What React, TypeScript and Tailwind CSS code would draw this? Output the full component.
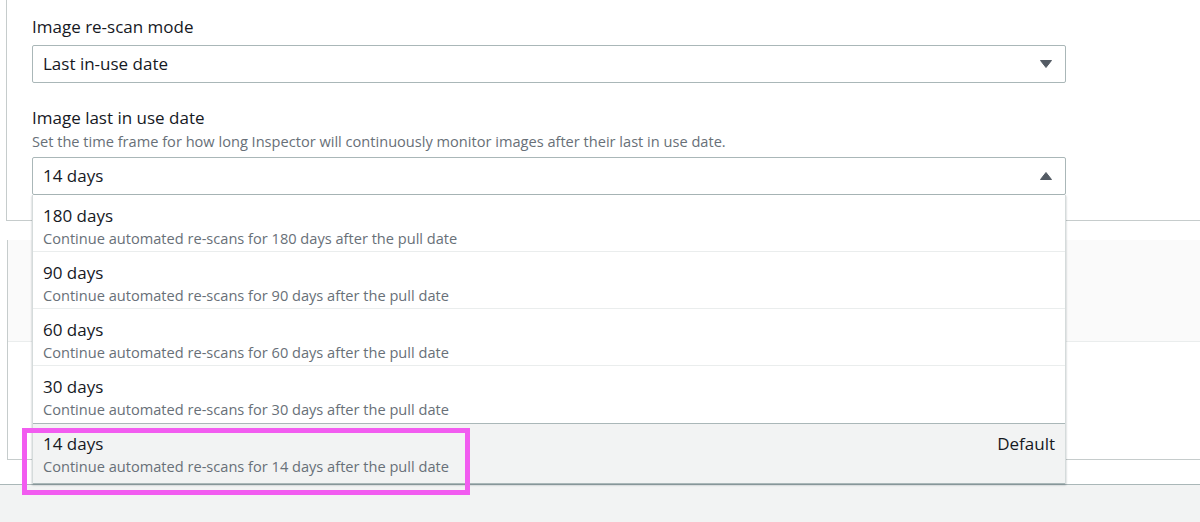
import React from "react";

const options = [
  { value: "180 days", days: 180 },
  { value: "90 days", days: 90 },
  { value: "60 days", days: 60 },
  { value: "30 days", days: 30 },
  { value: "14 days", days: 14, selected: true },
];

function Caret({ up }: { up?: boolean }) {
  return (
    <svg width="14" height="10" viewBox="0 0 14 10" className="shrink-0">
      {up ? (
        <path d="M7 1.5 L12.5 8.5 L1.5 8.5 Z" fill="#545b64" stroke="#545b64" strokeWidth="1" strokeLinejoin="round" />
      ) : (
        <path d="M1.5 1.5 L12.5 1.5 L7 8.5 Z" fill="#545b64" stroke="#545b64" strokeWidth="1" strokeLinejoin="round" />
      )}
    </svg>
  );
}

function SelectBox({ label, open }: { label: string; open?: boolean }) {
  return (
    <div className="flex items-center justify-between h-[38px] w-[1034px] rounded-[2px] border border-[#aab7b8] bg-white pl-[10px] pr-[12px] text-[17px] text-[#16191f]">
      <span>{label}</span>
      <Caret up={open} />
    </div>
  );
}

export default function App() {
  return (
    <div
      className="relative w-[1200px] h-[522px] overflow-hidden bg-white flex flex-col"
      style={{ fontFamily: '"Open Sans", "Liberation Sans", Arial, sans-serif' }}
    >
      {/* settings card */}
      <div className="ml-[6px] w-[1220px] h-[221px] shrink-0 border-l border-b border-[#c6cccc] pl-[25px] pt-[16px]">
        <div className="text-[17px] leading-[22px] text-[#16191f]">Image re-scan mode</div>
        <div className="mt-[7px]">
          <SelectBox label="Last in-use date" />
        </div>
        <div className="mt-[24px] text-[17px] leading-[22px] text-[#16191f]">Image last in use date</div>
        <div className="mt-[2px] text-[14.6px] leading-[20px] text-[#687078]">
          Set the time frame for how long Inspector will continuously monitor images after their last in use date.
        </div>
        <div className="relative mt-[6px] z-10">
          <SelectBox label="14 days" open />
          <div className="absolute left-0 top-full w-[1034px] bg-white border-x border-[#d5dbdb] shadow-[0_1px_2px_rgba(0,28,36,0.3)]">
            {options.map((o, i) => (
              <div
                key={o.value}
                className={
                  o.selected
                    ? "flex justify-between h-[61px] px-[10px] pt-[9px] bg-[#f2f3f3] border-y border-[#aab7b8]"
                    : `flex justify-between h-[57px] px-[10px] pt-[10px] ${i < 3 ? "border-b border-[#eaeded]" : ""}`
                }
              >
                <div>
                  <div className="text-[17px] leading-[22px] text-[#16191f]">{o.value}</div>
                  <div className="text-[14.6px] leading-[22px] text-[#687078]">
                    Continue automated re-scans for {o.days} days after the pull date
                  </div>
                </div>
                {o.selected && (
                  <div className="text-[17px] leading-[22px] text-[#16191f]">Default</div>
                )}
              </div>
            ))}
          </div>
        </div>
      </div>

      {/* second card, covered by dropdown */}
      <div className="mt-[19px] ml-[7px] w-[1220px] h-[220px] shrink-0 border-l border-b border-[#c6cccc] flex flex-col">
        <div className="h-[102px] bg-[#fafafa] border-b border-[#eaeded]" />
        <div className="flex-1" />
      </div>

      <div className="h-[24px] shrink-0" />
      <div className="flex-1 bg-[#f2f3f3] border-t border-[#aab7b8]" />

      {/* annotation highlight */}
      <div className="absolute left-[22px] top-[428px] w-[448px] h-[67px] border-[5px] border-[#f25cf0] z-20 pointer-events-none" />
    </div>
  );
}
